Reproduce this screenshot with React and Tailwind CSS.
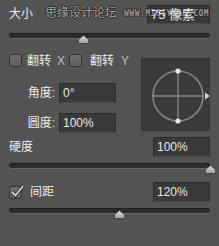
import React from "react";

const font = { fontFamily: '"Liberation Sans", "Noto Sans CJK SC", sans-serif' };

function Track({ thumb }) {
  return (
    <div className="relative mx-[9px] h-[5px]">
      <div className="h-[5px] rounded-full bg-[#2c2c2c] border-t border-[#1f1f1f] shadow-[0_1px_0_#666]" />
      <Thumb left={thumb} />
    </div>
  );
}

function Thumb({ left }) {
  return (
    <svg
      className="absolute top-[2px]"
      style={{ left: left - 5 }}
      width="11"
      height="9"
      viewBox="0 0 11 9"
    >
      <defs>
        <linearGradient id="tg" x1="0" y1="0" x2="0" y2="1">
          <stop offset="0" stopColor="#e0e0e0" />
          <stop offset="1" stopColor="#9c9c9c" />
        </linearGradient>
      </defs>
      <path d="M5.5 0.5 L10.5 4.5 L10.5 8.5 L0.5 8.5 L0.5 4.5 Z" fill="url(#tg)" stroke="#3a3a3a" strokeWidth="0.8" />
    </svg>
  );
}

function Box({ children, className = "" }) {
  return (
    <div
      className={`flex items-center bg-[#393939] border border-[#2c2c2c] border-b-[#4a4a4a] pl-[3px] text-[12px] text-[#e8e8e8] leading-none ${className}`}
    >
      {children}
    </div>
  );
}

function Check({ checked }) {
  return (
    <div className="relative w-[13px] h-[13px] rounded-[2px] bg-gradient-to-b from-[#6e6e6e] to-[#5e5e5e] border border-[#333]">
      {checked && (
        <svg className="absolute -top-[3px] left-0" width="15" height="15" viewBox="0 0 15 15">
          <path d="M2 8 L5.5 11.5 L13 2" fill="none" stroke="#2a2a2a" strokeWidth="3.2" />
          <path d="M2 8 L5.5 11.5 L13 2" fill="none" stroke="#d6d6d6" strokeWidth="1.8" />
        </svg>
      )}
    </div>
  );
}

export default function App() {
  return (
    <div className="relative w-[219px] h-[246px] bg-[#535353] text-[#ececec] overflow-hidden" style={font}>
      {/* row 1 */}
      <div className="flex items-center justify-between pl-[9px] pr-[9px] pt-[4px] h-[24px]">
        <span className="text-[12px] leading-none">大小</span>
        <Box className="w-[63px] h-[19px]">
          <span className="relative z-10 text-[13px]">75 像素</span>
        </Box>
      </div>
      {/* watermark */}
      <div className="pointer-events-none absolute left-[45px] top-[7px] flex items-end gap-[7px] z-0">
        <span
          className="text-[12px] leading-none text-[#a5a5a5] tracking-[0px]"
          style={{ textShadow: "1px 0 #2a2a2a, -1px 0 #2a2a2a, 0 1px #2a2a2a, 0 -1px #2a2a2a" }}
        >
          思缘设计论坛
        </span>
        <span
          className="text-[8px] leading-none font-bold text-[#9a9a9a] tracking-[0.5px] mb-[1px]"
          style={{ textShadow: "1px 0 #2a2a2a, -1px 0 #2a2a2a, 0 1px #2a2a2a, 0 -1px #2a2a2a", fontFamily: '"DejaVu Sans Mono", monospace' }}
        >
          WWW.MISSYUAN.COM
        </span>
      </div>

      <div className="mt-[9px]">
        <Track thumb={74} />
      </div>

      {/* flip + angle area */}
      <div className="flex mt-[16px] pl-[9px] pr-[9px]">
        <div className="flex flex-col w-[132px]">
          <div className="flex items-center h-[13px] text-[12px] leading-none">
            <Check />
            <span className="ml-[5px]">翻转</span>
            <span className="ml-[6px] text-[#bcbcbc]">X</span>
            <span className="ml-[4px]"><Check /></span>
            <span className="ml-[8px]">翻转</span>
            <span className="ml-[7px] text-[#bcbcbc]">Y</span>
          </div>
          <div className="flex items-center mt-[16px] h-[20px]">
            <span className="w-[50px] text-right pr-[4px] text-[12px] leading-none">角度:</span>
            <Box className="w-[57px] h-[20px]">0°</Box>
          </div>
          <div className="flex items-center mt-[10px] h-[20px]">
            <span className="w-[50px] text-right pr-[4px] text-[12px] leading-none">圆度:</span>
            <Box className="w-[57px] h-[20px]">100%</Box>
          </div>
        </div>
        <div className="ml-auto mt-[4px] w-[69px] h-[73px] bg-[#3b3b3b] border border-[#333]">
          <svg width="69" height="73" viewBox="0 0 69 73">
            <circle cx="36" cy="37" r="25" fill="none" stroke="#848484" strokeWidth="1.6" />
            <line x1="11" y1="37" x2="61" y2="37" stroke="#848484" strokeWidth="1.4" />
            <line x1="36" y1="12" x2="36" y2="62" stroke="#848484" strokeWidth="1.4" />
            <circle cx="36" cy="12" r="2.6" fill="#e6e6e6" />
            <circle cx="36" cy="62" r="2.6" fill="#e6e6e6" />
            <path d="M63 33.5 L68 37 L63 40.5 Z" fill="#d0d0d0" />
          </svg>
        </div>
      </div>

      {/* hardness */}
      <div className="flex items-center justify-between pl-[9px] pr-[9px] mt-[4px] h-[20px]">
        <span className="text-[12px] leading-none">硬度</span>
        <Box className="w-[57px] h-[20px]">100%</Box>
      </div>
      <div className="mt-[6px]">
        <Track thumb={201} />
      </div>

      {/* spacing */}
      <div className="flex items-center justify-between pl-[9px] pr-[9px] mt-[14px] h-[20px]">
        <div className="flex items-center">
          <Check checked />
          <span className="ml-[8px] text-[12px] leading-none">间距</span>
        </div>
        <Box className="w-[57px] h-[20px]">120%</Box>
      </div>
      <div className="mt-[6px]">
        <Track thumb={110} />
      </div>
    </div>
  );
}
